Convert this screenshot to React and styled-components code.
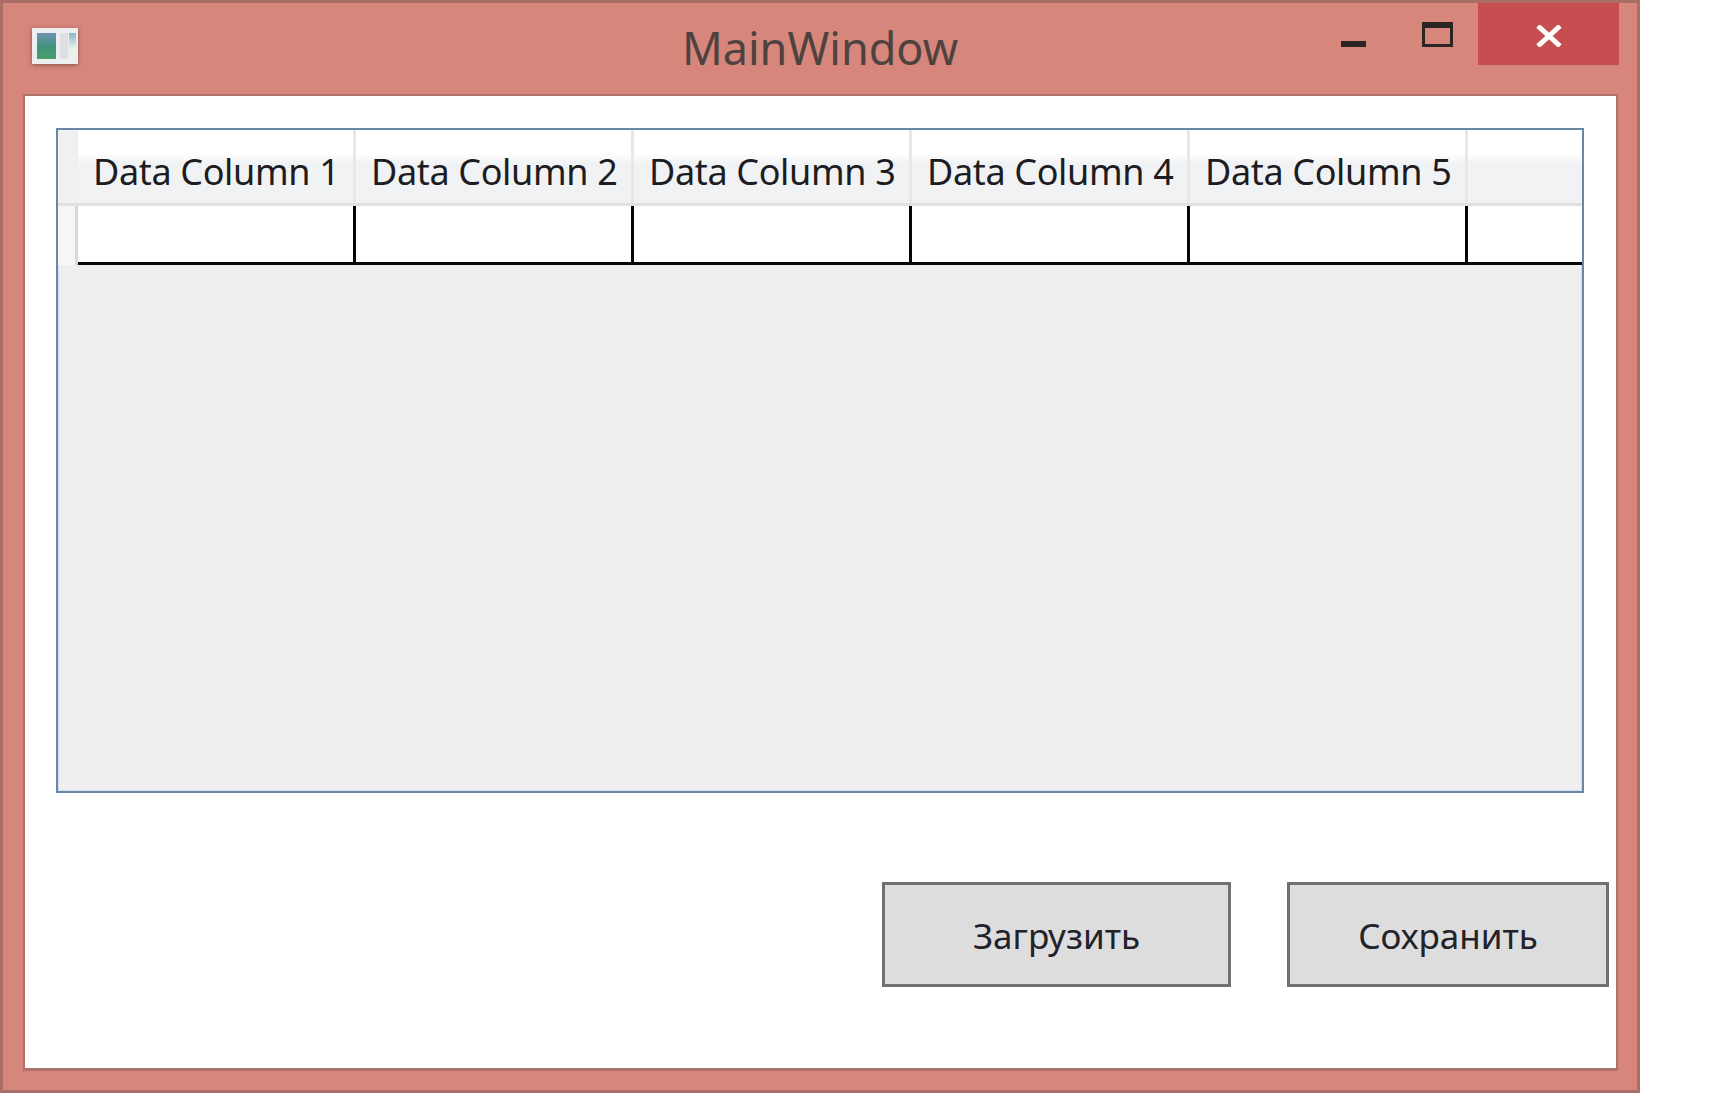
import React from "react";
import styled, { createGlobalStyle } from "styled-components";

const GlobalStyle = createGlobalStyle`
  html, body {
    margin: 0;
    background: #fff;
  }
  * {
    box-sizing: border-box;
  }
`;

const UI_FONT = `"Noto Sans", "Open Sans", sans-serif`;

const Window = styled.div`
  width: 1640px;
  height: 1093px;
  display: flex;
  flex-direction: column;
  background: #d6867b;
  border: 3px solid #a96f67;
  font-family: ${UI_FONT};
`;

const TitleBar = styled.div`
  height: 91px;
  flex: none;
  display: grid;
  grid-template-columns: 1fr auto 1fr;
  padding: 0 18px;
`;

const AppIcon = styled.svg`
  width: 46px;
  height: 38px;
  margin: 25px 0 0 11px;
  display: block;
  filter: drop-shadow(0 1px 2px rgba(110, 60, 50, 0.7));
`;

const Title = styled.div`
  font-size: 45px;
  line-height: 50px;
  margin-top: 20px;
  color: #4e4240;
`;

const Controls = styled.div`
  display: flex;
  justify-content: flex-end;
  align-items: flex-start;
`;

const ControlGlyph = styled.svg`
  display: block;
  margin: ${(p) => p.$margin};
`;

const CloseButton = styled.div`
  width: 141px;
  height: 62px;
  background: #c74e50;
  display: flex;
  justify-content: center;
  padding-top: 22px;
`;

const Content = styled.div`
  flex: none;
  height: 977px;
  margin: 0 19px 0 20px;
  display: flex;
  flex-direction: column;
  background: #fff;
  border: 2px solid #ad7269;
  border-bottom-width: 3px;
  padding: 32px 32px 0 31px;
`;

const Grid = styled.div`
  height: 665px;
  flex: none;
  background: #efefef;
  border: 2px solid #6888a8;
  box-shadow: inset 0 0 0 1px #d3dfea;
  display: flex;
  flex-direction: column;
`;

const HeaderRow = styled.div`
  display: flex;
  height: 76px;
  flex: none;
  background: linear-gradient(#fff 0, #fff 32%, #f1f2f4 46%, #f1f2f4 100%);
  border-bottom: 3px solid #e0e1e3;
`;

const Corner = styled.div`
  width: 20px;
  flex: none;
  background: #eff0f2;
`;

const ColumnHeader = styled.div`
  width: 278px;
  flex: none;
  display: flex;
  align-items: center;
  padding: 9px 0 0 15px;
  font-size: 36px;
  letter-spacing: -0.35px;
  color: #1c1c22;
  white-space: nowrap;
  border-right: 3px solid #e6e7e9;
`;

const DataRow = styled.div`
  display: flex;
  height: 59px;
  flex: none;
  background: #fff;
  border-bottom: 3px solid #050505;
`;

const RowHeader = styled.div`
  width: 20px;
  flex: none;
  margin-bottom: -3px;
  background: #f6f6f7;
  border-right: 3px solid #d8d9db;
`;

const Cell = styled.div`
  flex: ${(p) => (p.$filler ? "1" : "none")};
  width: ${(p) => (p.$filler ? "auto" : "278px")};
  border-right: ${(p) => (p.$filler ? "none" : "3px solid #050505")};
`;

const ButtonRow = styled.div`
  display: flex;
  justify-content: flex-end;
  gap: 56px;
  margin: 89px -25px 0 0;
`;

const ActionButton = styled.button`
  width: ${(p) => p.$width}px;
  height: 105px;
  padding: 2px 0 0;
  background: #dddddd;
  border: 3px solid #707070;
  border-radius: 0;
  font-family: ${UI_FONT};
  font-size: 35px;
  color: #22222a;
`;

const columns = [1, 2, 3, 4, 5];

export default function App() {
  return (
    <>
      <GlobalStyle />
      <Window>
        <TitleBar>
          <AppIcon viewBox="0 0 46 38">
            <defs>
              <linearGradient id="iconPane" x1="0" y1="0" x2="0" y2="1">
                <stop offset="0" stopColor="#6f94b4" />
                <stop offset="0.55" stopColor="#3f9379" />
                <stop offset="1" stopColor="#4ba06e" />
              </linearGradient>
              <linearGradient id="iconSide" x1="0" y1="0" x2="0" y2="1">
                <stop offset="0" stopColor="#8fb4cf" />
                <stop offset="0.6" stopColor="#e9f2e4" />
                <stop offset="1" stopColor="#eef0f0" />
              </linearGradient>
            </defs>
            <rect x="0" y="0" width="46" height="36" fill="#eceef0" />
            <rect x="5" y="5" width="19" height="26" fill="url(#iconPane)" />
            <rect x="28" y="5" width="8" height="26" fill="#dfe0e3" />
            <rect x="37" y="5" width="7" height="26" fill="url(#iconSide)" />
          </AppIcon>
          <Title>MainWindow</Title>
          <Controls>
            <ControlGlyph width="25" height="6" viewBox="0 0 25 6" $margin="38px 56px 0 0">
              <rect width="25" height="6" fill="#2b2523" />
            </ControlGlyph>
            <ControlGlyph width="31" height="25" viewBox="0 0 31 25" $margin="19px 25px 0 0">
              <rect x="1.5" y="3" width="28" height="20.5" fill="none" stroke="#2b2523" strokeWidth="3" />
              <rect width="31" height="6" fill="#2b2523" />
            </ControlGlyph>
            <CloseButton>
              <ControlGlyph width="26" height="22" viewBox="0 0 26 22" $margin="0">
                <path d="M2 1 L24 21 M24 1 L2 21" stroke="#fff" strokeWidth="5" fill="none" />
              </ControlGlyph>
            </CloseButton>
          </Controls>
        </TitleBar>
        <Content>
          <Grid>
            <HeaderRow>
              <Corner />
              {columns.map((n) => (
                <ColumnHeader key={n}>Data Column {n}</ColumnHeader>
              ))}
            </HeaderRow>
            <DataRow>
              <RowHeader />
              {columns.map((n) => (
                <Cell key={n} />
              ))}
              <Cell $filler />
            </DataRow>
          </Grid>
          <ButtonRow>
            <ActionButton $width={349}>Загрузить</ActionButton>
            <ActionButton $width={322}>Сохранить</ActionButton>
          </ButtonRow>
        </Content>
      </Window>
    </>
  );
}
